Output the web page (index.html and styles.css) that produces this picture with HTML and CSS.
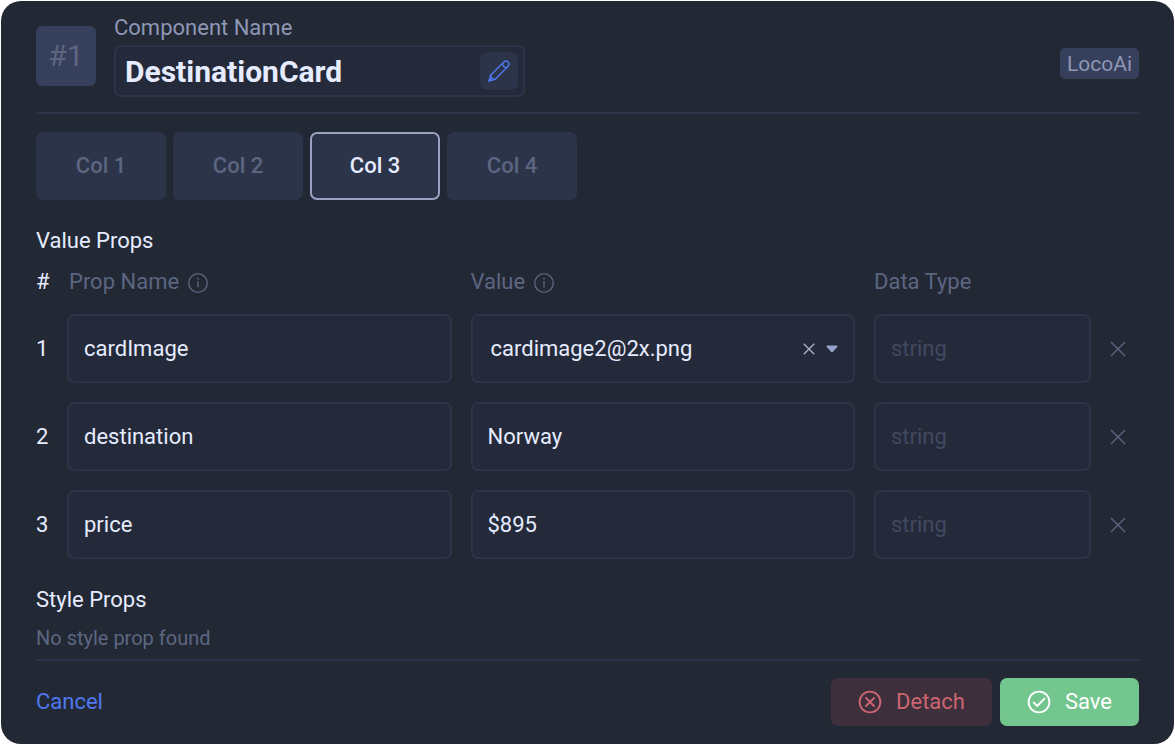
FILE: index.html
```
<!DOCTYPE html>
<html lang="en">
<head>
  <meta charset="UTF-8" />
  <meta name="viewport" content="width=device-width, initial-scale=1" />
  <title>DestinationCard</title>
  <link rel="stylesheet" href="styles.css">
</head>
<body>

  <!-- shared icons -->
  <svg class="sprite" aria-hidden="true">
    <symbol id="info" viewBox="0 0 20 20">
      <circle cx="10" cy="10" r="9.3" fill="none" stroke="currentColor" stroke-width="1.3" />
      <path d="M10 8v6.4" stroke="currentColor" stroke-width="1.3" />
      <circle cx="10" cy="5.7" r="0.9" fill="currentColor" />
    </symbol>
    <symbol id="cross" viewBox="0 0 16 16">
      <path d="M1 1l14 14M15 1L1 15" stroke="currentColor" />
    </symbol>
  </svg>

  <form class="card">
    <header class="header">
      <div class="index">#1</div>
      <div class="name">
        <label for="componentName">Component Name</label>
        <div class="name-field">
          <input type="text" id="componentName" value="DestinationCard">
          <button type="button" class="edit" aria-label="Edit name">
            <svg width="22" height="22" viewBox="0 0 22 22" fill="none" stroke="currentColor" stroke-width="1.4" stroke-linejoin="round" stroke-linecap="round">
              <path d="M1 21L2.6 15.2L15.8 2C17 .8 18.9 .8 20.1 2C21.3 3.2 21.3 5 20.1 6.2L6.9 19.4Z" />
              <path d="M14.6 3.2C14.7 5.9 16.3 7.4 18.9 7.4" />
              <path d="M2.6 15.2L3.6 18.4L6.9 19.4M1 21L3.6 18.4" />
            </svg>
          </button>
        </div>
      </div>
      <span class="tag">LocoAi</span>
    </header>

    <nav class="tabs">
      <button type="button" class="tab">Col 1</button>
      <button type="button" class="tab">Col 2</button>
      <button type="button" class="tab active">Col 3</button>
      <button type="button" class="tab">Col 4</button>
    </nav>

    <h2>Value Props</h2>
    <table class="props">
      <thead>
        <tr>
          <th class="col-num">#</th>
          <th class="col-name">Prop Name <svg class="info"><use href="#info" /></svg></th>
          <th>Value <svg class="info"><use href="#info" /></svg></th>
          <th class="col-type">Data Type</th>
          <th class="col-remove"></th>
        </tr>
      </thead>
      <tbody>
        <tr>
          <td>1</td>
          <td><input type="text" class="field" aria-label="Prop name 1" value="cardImage"></td>
          <td>
            <div class="field select">
              <select aria-label="Value 1">
                <option>cardimage2@2x.png</option>
              </select>
              <button type="button" class="clear" aria-label="Clear value"><svg width="12" height="12"><use href="#cross" /></svg></button>
              <svg class="caret" width="12" height="8" viewBox="0 0 12 8"><path d="M1.5 .5h9c1 0 1.4 .9 .7 1.6L7 6.8c-.6 .7-1.4 .7-2 0L.8 2.1C.1 1.4 .5 .5 1.5 .5z" fill="currentColor" /></svg>
            </div>
          </td>
          <td><input type="text" class="field" aria-label="Data type 1" placeholder="string"></td>
          <td><button type="button" class="remove" aria-label="Remove prop 1"><svg width="16" height="16"><use href="#cross" /></svg></button></td>
        </tr>
        <tr>
          <td>2</td>
          <td><input type="text" class="field" aria-label="Prop name 2" value="destination"></td>
          <td><input type="text" class="field" aria-label="Value 2" value="Norway"></td>
          <td><input type="text" class="field" aria-label="Data type 2" placeholder="string"></td>
          <td><button type="button" class="remove" aria-label="Remove prop 2"><svg width="16" height="16"><use href="#cross" /></svg></button></td>
        </tr>
        <tr>
          <td>3</td>
          <td><input type="text" class="field" aria-label="Prop name 3" value="price"></td>
          <td><input type="text" class="field" aria-label="Value 3" value="$895"></td>
          <td><input type="text" class="field" aria-label="Data type 3" placeholder="string"></td>
          <td><button type="button" class="remove" aria-label="Remove prop 3"><svg width="16" height="16"><use href="#cross" /></svg></button></td>
        </tr>
      </tbody>
    </table>

    <h2>Style Props</h2>
    <p class="empty">No style prop found</p>

    <footer class="footer">
      <a href="#" class="cancel">Cancel</a>
      <button type="button" class="btn detach">
        <svg width="24" height="24" viewBox="0 0 24 24" fill="none" stroke="currentColor" stroke-width="1.9" stroke-linecap="round">
          <circle cx="12" cy="12" r="10.4" />
          <path d="M8 8l8 8M16 8l-8 8" />
        </svg>
        Detach
      </button>
      <button type="submit" class="btn save">
        <svg width="24" height="24" viewBox="0 0 24 24" fill="none" stroke="currentColor" stroke-width="1.9" stroke-linecap="round" stroke-linejoin="round">
          <circle cx="12" cy="12" r="10.4" />
          <path d="M6.8 12.6l3.4 3.4L17.400 8.6" />
        </svg>
        Save
      </button>
    </footer>
  </form>

</body>
</html>
```
FILE: styles.css
```
:root {
  --bg: #232835;
  --bg-field: #252a3a;
  --bg-tab: #2c3449;
  --bg-badge: #363f5b;
  --border: #2d344a;
  --text: #e6ecff;
  --text-label: #8e97b5;
  --text-muted: #5c6681;
  --link: #5078f0;
}

* {
  box-sizing: border-box;
}

body {
  margin: 0;
  padding: 1px;
  background-color: #fff;
  color: var(--text);
  font-family: Roboto, Arial, sans-serif;
  font-size: 22px;
  line-height: 26px;
}

input,
select,
button {
  font: inherit;
  color: inherit;
}

button {
  padding: 0;
  border: none;
  background: none;
  cursor: pointer;
}

.sprite {
  display: none;
}

.card {
  background-color: var(--bg);
  border-radius: 20px;
  padding: 14px 35px 18px;
}

/* header */
.header {
  display: flex;
  align-items: center;
  padding-bottom: 15px;
  border-bottom: 2px solid var(--border);
}

.index {
  width: 60px;
  height: 60px;
  margin-right: 18px;
  border-radius: 6px;
  background-color: var(--bg-badge);
  color: var(--text-muted);
  font-size: 30px;
  line-height: 60px;
  text-align: center;
}

.name {
  display: flex;
  flex-direction: column;
  gap: 4px;
  flex: 0 1 411px;
  min-width: 0;
}

.name label {
  color: var(--text-label);
}

.name-field {
  display: flex;
  align-items: center;
  height: 52px;
  padding: 0 5px 0 9px;
  border: 2px solid var(--border);
  border-radius: 7px;
  background-color: var(--bg-field);
}

.name-field input {
  flex: 1;
  min-width: 0;
  padding: 0;
  border: none;
  outline: none;
  background: none;
  font-size: 30px;
  font-weight: bold;
}

.edit {
  display: flex;
  align-items: center;
  justify-content: center;
  width: 38px;
  height: 38px;
  border-radius: 7px;
  background-color: var(--bg-tab);
  color: var(--link);
}

.tag {
  margin-left: auto;
  margin-top: 15px;
  padding: 3px 7px 2px;
  border-radius: 5px;
  background-color: var(--bg-badge);
  color: var(--text-label);
  font-size: 21px;
}

/* column tabs */
.tabs {
  display: flex;
  gap: 7px;
  margin-top: 18px;
}

.tab {
  width: 130px;
  height: 68px;
  border: 2px solid transparent;
  border-radius: 7px;
  background-color: var(--bg-tab);
  color: var(--text-muted);
  font-weight: 500;
}

.tab.active {
  border-color: #99a2c0;
  color: var(--text);
}

h2 {
  margin: 28px 0 0;
  font-size: inherit;
  font-weight: normal;
}

/* props table */
.props {
  width: 100%;
  margin-top: 15px;
  table-layout: fixed;
  border-collapse: collapse;
}

.props th {
  padding: 0 0 19px;
  color: var(--text-muted);
  font-weight: normal;
  text-align: left;
}

.props td {
  padding: 0 19px 19px 0;
}

.props td:first-child,
.props td:last-child {
  padding-right: 0;
}

.props .col-num {
  width: 31px;
  color: var(--text);
}

.props .col-name {
  padding-left: 2px;
}

.props .col-type {
  width: 236px;
}

.props .col-remove {
  width: 29px;
}

.info {
  width: 20px;
  height: 20px;
  margin-left: 3px;
  vertical-align: -4px;
}

.field {
  display: block;
  width: 100%;
  height: 69px;
  padding: 0 15px;
  border: 2px solid var(--border);
  border-radius: 7px;
  outline: none;
  background-color: var(--bg-field);
}

.field::placeholder {
  color: #414860;
  opacity: 1;
}

.select {
  display: flex;
  align-items: center;
  padding-left: 18px;
}

.select select {
  flex: 1;
  min-width: 0;
  padding: 0;
  border: none;
  outline: none;
  appearance: none;
  background: none;
}

.clear {
  display: flex;
  margin-right: 11px;
  color: #a3a9bc;
}

.clear svg {
  stroke-width: 2;
}

.caret {
  color: #99a2c8;
}

.remove {
  display: flex;
  color: var(--text-muted);
}

.remove svg {
  stroke-width: 1.4;
}

.props + h2 {
  margin-top: 9px;
}

.empty {
  margin: 12px 0 8px;
  color: var(--text-muted);
  font-size: 20px;
}

/* footer */
.footer {
  display: flex;
  align-items: center;
  gap: 8px;
  padding-top: 17px;
  border-top: 2px solid var(--border);
}

.cancel {
  margin-right: auto;
  color: var(--link);
  text-decoration: none;
}

.btn {
  display: flex;
  align-items: center;
  gap: 14px;
  height: 48px;
  padding: 0 27px;
  border-radius: 7px;
}

.detach {
  background-color: #3e2f3c;
  color: #cb6570;
}

.save {
  background-color: #73c68e;
  color: #fff;
}
```
